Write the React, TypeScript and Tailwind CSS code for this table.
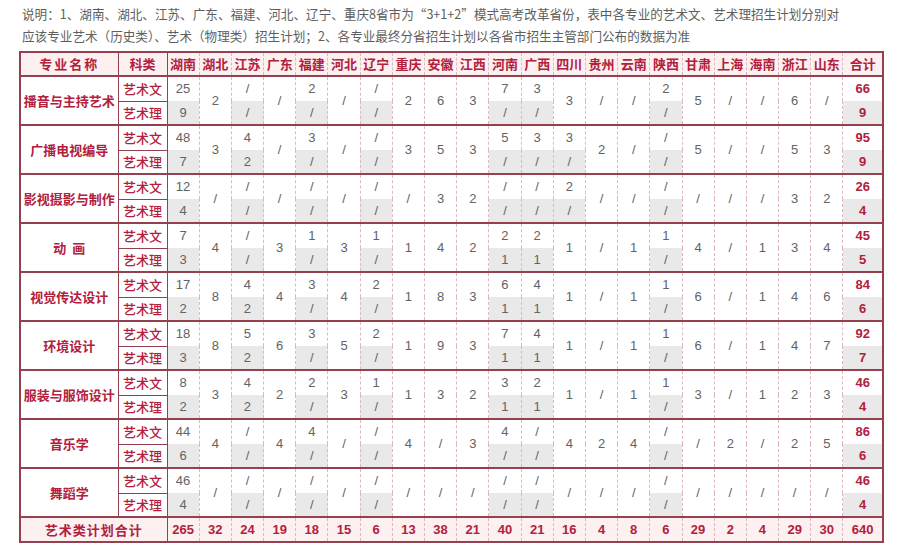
import React from 'react';

type Cell = string | [string, string];

const heads = ['湖南','湖北','江苏','广东','福建','河北','辽宁','重庆','安徽','江西','河南','广西','四川','贵州','云南','陕西','甘肃','上海','海南','浙江','山东'];

const rows: { name: string; cells: Cell[]; total: [string, string] }[] = [
  { name: '播音与主持艺术', cells: [['25','9'],'2',['/','/'],'/',['2','/'],'/',['/','/'],'2','6','3',['7','/'],['3','/'],'3','/','/',['2','/'],'5','/','/','6','/'], total: ['66','9'] },
  { name: '广播电视编导', cells: [['48','7'],'3',['4','2'],'/',['3','/'],'/',['/','/'],'3','5','3',['5','/'],['3','/'],['3','/'],'2','/',['/','/'],'5','/','/','5','3'], total: ['95','9'] },
  { name: '影视摄影与制作', cells: [['12','4'],'/',['/','/'],'/',['/','/'],'/',['/','/'],'/','3','2',['/','/'],['/','/'],['2','/'],'/','/',['/','/'],'/','/','/','3','2'], total: ['26','4'] },
  { name: '动  画', cells: [['7','3'],'4',['/','/'],'3',['1','/'],'3',['1','/'],'1','4','2',['2','1'],['2','1'],'1','/','1',['1','/'],'4','/','1','3','4'], total: ['45','5'] },
  { name: '视觉传达设计', cells: [['17','2'],'8',['4','2'],'4',['3','/'],'4',['2','/'],'1','8','3',['6','1'],['4','1'],'1','/','1',['1','/'],'6','/','1','4','6'], total: ['84','6'] },
  { name: '环境设计', cells: [['18','3'],'8',['5','2'],'6',['3','/'],'5',['2','/'],'1','9','3',['7','1'],['4','1'],'1','/','1',['1','/'],'6','/','1','4','7'], total: ['92','7'] },
  { name: '服装与服饰设计', cells: [['8','2'],'3',['4','2'],'2',['2','/'],'3',['1','/'],'1','3','2',['3','1'],['2','1'],'1','/','1',['1','/'],'3','/','1','2','3'], total: ['46','4'] },
  { name: '音乐学', cells: [['44','6'],'4',['/','/'],'4',['4','/'],'/',['/','/'],'4','/','3',['4','/'],['/','/'],'4','2','4',['/','/'],'/','2','/','2','5'], total: ['86','6'] },
  { name: '舞蹈学', cells: [['46','4'],'/',['/','/'],'/',['/','/'],'/',['/','/'],'/','/','/',['/','/'],['/','/'],'/','/','/',['/','/'],'/','/','/','/','/'], total: ['46','4'] },
];

const totals = ['265','32','24','19','18','15','6','13','38','21','40','21','16','4','8','6','29','2','4','29','30'];

const cjk = "font-['Noto_Sans_CJK_SC',sans-serif]";
const num = "font-['Liberation_Sans','Noto_Sans_CJK_SC',sans-serif]";
const dash = 'border-l border-l-[#dcb9c0] [border-left-style:dashed]';

export default function App() {
  return (
    <div className="w-[900px] h-[551px] bg-white overflow-hidden">
      <div className={`${cjk} text-[12.6px] leading-[22px] text-[#5e5e5e] pl-[22px] pt-[3px]`}>
        <p>说明：1、湖南、湖北、江苏、广东、福建、河北、辽宁、重庆8省市为“3+1+2”模式高考改革省份，表中各专业的艺术文、艺术理招生计划分别对</p>
        <p>应该专业艺术（历史类）、艺术（物理类）招生计划；2、各专业最终分省招生计划以各省市招生主管部门公布的数据为准</p>
      </div>
      <table className="ml-[19px] mt-[4px] w-[864px] table-fixed border-collapse border-2 border-[#94404f]">
        <colgroup>
          <col className="w-[98px]" />
          <col className="w-[49px]" />
          {heads.map((h) => (
            <col key={h} className="w-[32.2px]" />
          ))}
          <col className="w-[40px]" />
        </colgroup>
        <thead>
          <tr className="h-[24px] bg-[#fcf0f1] border-b-2 border-b-[#94404f]">
            <th className={`${cjk} text-[13px] font-bold text-[#b3203d] tracking-[2px] border-r border-r-[#94404f] p-0`}>专业名称</th>
            <th className={`${cjk} text-[13px] font-bold text-[#b3203d] border-r border-r-[#94404f] p-0`}>科类</th>
            {heads.map((h, i) => (
              <th key={h} className={`${cjk} text-[13px] font-bold text-[#b3203d] p-0 whitespace-nowrap ${i > 0 ? dash : ''}`}>{h}</th>
            ))}
            <th className={`${cjk} text-[13px] font-bold text-[#b3203d] p-0 ${dash}`}>合计</th>
          </tr>
        </thead>
        <tbody>
          {rows.map((r) => (
            <React.Fragment key={r.name}>
              <tr className="h-[25px] border-t-2 border-t-[#94404f]">
                <td rowSpan={2} className={`${cjk} text-[13px] font-bold text-[#b3203d] text-center border-r border-r-[#94404f] p-0 whitespace-pre`}>{r.name}</td>
                <td className={`${cjk} text-[13px] font-medium text-[#b3203d] text-center border-r border-r-[#94404f] p-0`}>艺术文</td>
                {r.cells.map((c, i) =>
                  Array.isArray(c) ? (
                    <td key={i} className={`${num} text-[13px] text-[#636363] text-center p-0 ${i > 0 ? dash : ''}`}>{c[0]}</td>
                  ) : (
                    <td key={i} rowSpan={2} className={`${num} text-[13px] text-[#636363] text-center p-0 ${i > 0 ? dash : ''}`}>{c}</td>
                  )
                )}
                <td className={`${num} text-[13px] font-bold text-[#b3203d] text-center p-0 ${dash}`}>{r.total[0]}</td>
              </tr>
              <tr className="h-[24px]">
                <td className={`${cjk} text-[13px] font-medium text-[#b3203d] text-center border-r border-r-[#94404f] border-t border-t-[#94404f] p-0`}>艺术理</td>
                {r.cells.map((c, i) =>
                  Array.isArray(c) ? (
                    <td key={i} className={`${num} text-[13px] text-[#636363] text-center bg-[#e9e9e9] p-0 ${i > 0 ? dash : ''}`}>{c[1]}</td>
                  ) : null
                )}
                <td className={`${num} text-[13px] font-bold text-[#b3203d] text-center bg-[#e9e9e9] p-0 ${dash}`}>{r.total[1]}</td>
              </tr>
            </React.Fragment>
          ))}
          <tr className="h-[25px] bg-[#fcf0f1] border-t-2 border-t-[#94404f]">
            <td colSpan={2} className={`${cjk} text-[13px] font-bold text-[#b3203d] text-center tracking-[1px] border-r border-r-[#94404f] p-0`}>艺术类计划合计</td>
            {totals.map((t, i) => (
              <td key={i} className={`${num} text-[13px] font-bold text-[#b3203d] text-center p-0 ${i > 0 ? dash : ''}`}>{t}</td>
            ))}
            <td className={`${num} text-[13px] font-bold text-[#b3203d] text-center p-0 ${dash}`}>640</td>
          </tr>
        </tbody>
      </table>
    </div>
  );
}
